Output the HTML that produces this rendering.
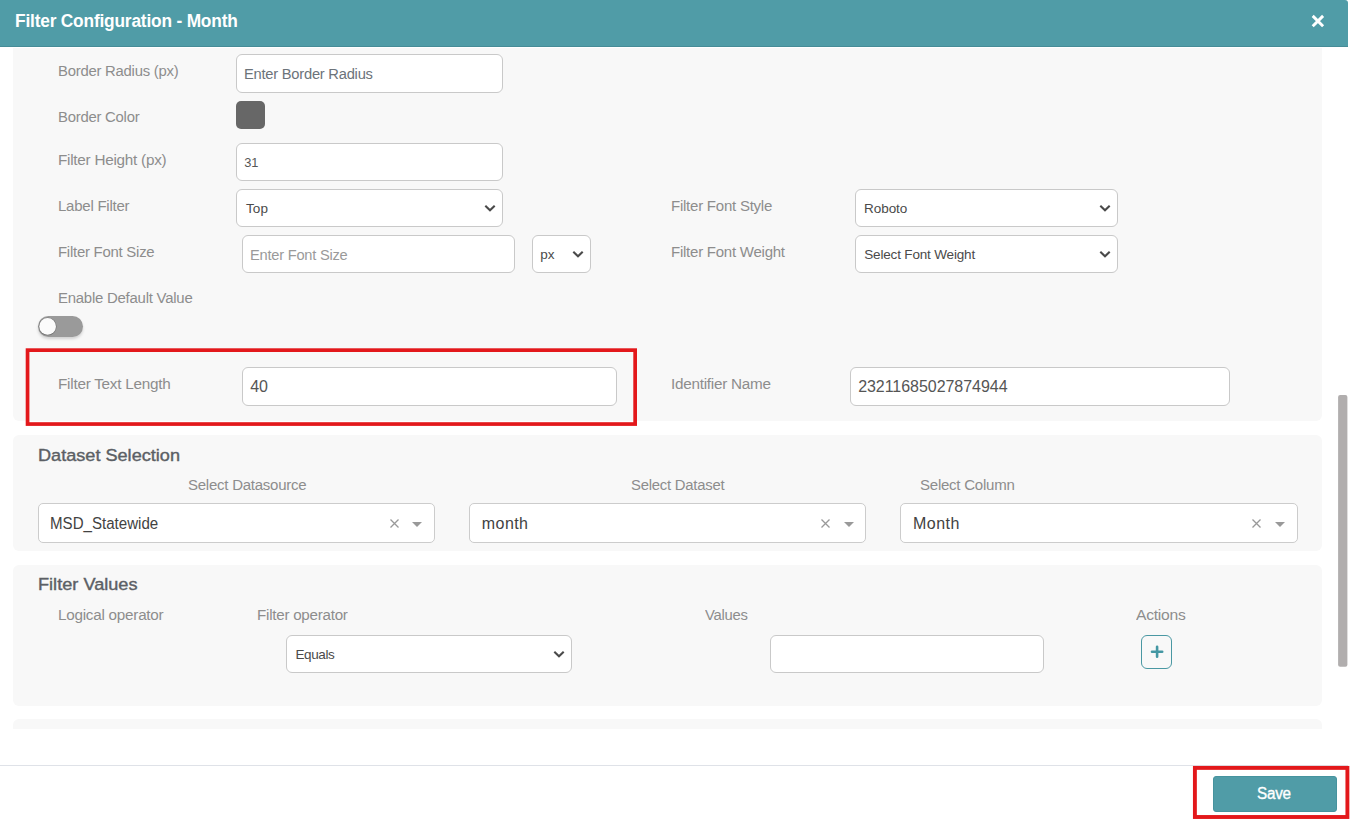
<!DOCTYPE html>
<html lang="en">
<head>
<meta charset="utf-8">
<title>Filter Configuration - Month</title>
<style>
*{box-sizing:border-box;margin:0;padding:0}
html,body{width:1350px;height:819px;overflow:hidden;background:#fff;font-family:"Liberation Sans",sans-serif;}
#root{position:relative;width:1350px;height:819px;overflow:hidden;background:#fff}
.abs{position:absolute}
.t{white-space:nowrap;line-height:20px;transform-origin:0 50%}
.hdr{left:0;top:0;width:1348px;height:47px;background:#509ca7;border-top-right-radius:3px;border-bottom:1px solid #468c97;box-shadow:0 1px 0 #fff}
.title{color:#fff;font-weight:bold}
.panel{left:13px;width:1309px;background:#f8f8f8}
.lbl{color:#8d8d8d}
.h{color:#5b5f65;-webkit-text-stroke:0.4px #5b5f65}
.ph{color:#6c737a}
.ph2{color:#9a9a9a}
.sm{color:#4a4a4a}
#V3{color:#565656}
.val{color:#555}
.ngv{color:#424242}
.save{color:#fff;-webkit-text-stroke:0.35px #fff}
.inp{background:#fff;border:1px solid #c9c9c9;border-radius:6px}
.chev{position:absolute;right:6.1px;top:14px;width:12px;height:9px}
.ngs{background:#fff;border:1px solid #ccc;border-radius:5px;height:40px}
.ngs .x{position:absolute;right:35.4px;top:15.3px;width:9px;height:9px}
.ngs .c{position:absolute;right:12px;top:17.7px;width:0;height:0;border-left:5px solid transparent;border-right:5px solid transparent;border-top:5.5px solid #999}
</style>
</head>
<body>
<div id="root">

<!-- panels -->
<div class="abs panel" style="top:48px;height:373px;border-radius:0 0 6px 6px"></div>
<div class="abs panel" style="top:435px;height:116px;border-radius:6px"></div>
<div class="abs panel" style="top:565px;height:141px;border-radius:6px"></div>
<div class="abs panel" style="top:719px;height:10px;border-radius:6px 6px 0 0"></div>

<!-- header -->
<div class="abs hdr"></div>
<svg class="abs" style="left:1310px;top:13px" width="16" height="16" viewBox="0 0 16 16"><path d="M2.7 2.9 L13.1 13.3 M13.1 2.9 L2.7 13.3" stroke="#fff" stroke-width="2.9" fill="none"/></svg>

<!-- row 1 -->
<div class="abs inp" style="left:236px;top:54px;width:267px;height:39px"></div>
<!-- row 2 -->
<div class="abs" style="left:236px;top:101px;width:29px;height:28px;background:#676767;border-radius:5px"></div>
<!-- row 3 -->
<div class="abs inp" style="left:236px;top:143px;width:267px;height:38px"></div>
<!-- row 4 -->
<div class="abs inp" style="left:236px;top:189px;width:267px;height:38px"><svg class="chev" viewBox="0 0 12 9"><path d="M1.3 1.8 L6 6.3 L10.7 1.8" stroke="#4a4a4a" stroke-width="2.1" fill="none"/></svg></div>
<div class="abs inp" style="left:855px;top:189px;width:263px;height:38px"><svg class="chev" viewBox="0 0 12 9"><path d="M1.3 1.8 L6 6.3 L10.7 1.8" stroke="#4a4a4a" stroke-width="2.1" fill="none"/></svg></div>
<!-- row 5 -->
<div class="abs inp" style="left:242px;top:235px;width:273px;height:38px"></div>
<div class="abs inp" style="left:532px;top:235px;width:59px;height:38px"><svg class="chev" viewBox="0 0 12 9"><path d="M1.3 1.8 L6 6.3 L10.7 1.8" stroke="#4a4a4a" stroke-width="2.1" fill="none"/></svg></div>
<div class="abs inp" style="left:855px;top:235px;width:263px;height:38px"><svg class="chev" viewBox="0 0 12 9"><path d="M1.3 1.8 L6 6.3 L10.7 1.8" stroke="#4a4a4a" stroke-width="2.1" fill="none"/></svg></div>
<!-- row 6 toggle -->
<div class="abs" style="left:38px;top:316px;width:45px;height:21px;border-radius:11px;background:#9a9a9a;box-shadow:0 2px 3px rgba(0,0,0,.16)"></div>
<svg class="abs" style="left:34px;top:312px" width="30" height="30" viewBox="0 0 30 30"><circle cx="13.6" cy="14.6" r="9" fill="#6e6e6e" opacity="0.85"/><circle cx="13.6" cy="14.4" r="8.35" fill="#fbfbfb"/></svg>
<!-- row 7 -->
<div class="abs inp" style="left:242px;top:367px;width:375px;height:39px"></div>
<div class="abs inp" style="left:850px;top:367px;width:380px;height:39px"></div>

<!-- dataset selection -->
<div class="abs ngs" style="left:38px;top:503px;width:397px"><svg class="x" viewBox="0 0 9 9"><path d="M0.5 0.5 L8.5 8.5 M8.5 0.5 L0.5 8.5" stroke="#999" stroke-width="1.3" fill="none"/></svg><i class="c"></i></div>
<div class="abs ngs" style="left:469px;top:503px;width:397px"><svg class="x" viewBox="0 0 9 9"><path d="M0.5 0.5 L8.5 8.5 M8.5 0.5 L0.5 8.5" stroke="#999" stroke-width="1.3" fill="none"/></svg><i class="c" style="right:11px"></i></div>
<div class="abs ngs" style="left:900px;top:503px;width:398px"><svg class="x" style="right:36.1px" viewBox="0 0 9 9"><path d="M0.5 0.5 L8.5 8.5 M8.5 0.5 L0.5 8.5" stroke="#999" stroke-width="1.3" fill="none"/></svg><i class="c"></i></div>

<!-- filter values -->
<div class="abs inp" style="left:286px;top:635px;width:286px;height:38px"><svg class="chev" viewBox="0 0 12 9"><path d="M1.3 1.8 L6 6.3 L10.7 1.8" stroke="#4a4a4a" stroke-width="2.1" fill="none"/></svg></div>
<div class="abs inp" style="left:770px;top:635px;width:274px;height:38px"></div>
<div class="abs" style="left:1141px;top:635px;width:31px;height:34px;border:1.2px solid #4a98a3;border-radius:6px;background:transparent"></div>
<svg class="abs" style="left:1150px;top:645px" width="14" height="14" viewBox="0 0 14 14"><path d="M7.1 1.8 V11.7 M2 6.75 H12.2" stroke="#4497a3" stroke-width="2.6" stroke-linecap="round" fill="none"/></svg>

<!-- footer -->
<div class="abs" style="left:0;top:729px;width:1337px;height:90px;background:#fff"></div>
<div class="abs" style="left:0;top:765px;width:1348px;height:1px;background:#dfe2e8"></div>
<div class="abs" style="left:1213px;top:776px;width:124px;height:36px;background:#509ca7;border-radius:3px;border:1px solid #46939e"></div>

<div id="title" class="abs t title" style="left:15.47px;top:10.96px;font-size:18px;letter-spacing:-0.200px;transform:scaleX(0.9622)">Filter Configuration - Month</div>
<div id="L1" class="abs t lbl" style="left:58.04px;top:60.83px;font-size:15.5px;letter-spacing:-0.250px;transform:scaleX(0.9586)">Border Radius (px)</div>
<div id="L2" class="abs t lbl" style="left:58.04px;top:106.83px;font-size:15.5px;letter-spacing:-0.250px;transform:scaleX(0.9591)">Border Color</div>
<div id="L3" class="abs t lbl" style="left:57.94px;top:149.83px;font-size:15.5px;letter-spacing:-0.250px;transform:scaleX(0.9850)">Filter Height (px)</div>
<div id="L4" class="abs t lbl" style="left:57.95px;top:195.83px;font-size:15.5px;letter-spacing:-0.250px;transform:scaleX(0.9682)">Label Filter</div>
<div id="L5" class="abs t lbl" style="left:58.04px;top:241.83px;font-size:15.5px;letter-spacing:-0.250px;transform:scaleX(0.9620)">Filter Font Size</div>
<div id="L6" class="abs t lbl" style="left:58.04px;top:287.83px;font-size:15.5px;letter-spacing:-0.250px;transform:scaleX(0.9639)">Enable Default Value</div>
<div id="L7" class="abs t lbl" style="left:57.94px;top:373.83px;font-size:15.5px;letter-spacing:-0.250px;transform:scaleX(0.9862)">Filter Text Length</div>
<div id="R4" class="abs t lbl" style="left:670.95px;top:195.83px;font-size:15.5px;letter-spacing:-0.250px;transform:scaleX(0.9691)">Filter Font Style</div>
<div id="R5" class="abs t lbl" style="left:670.95px;top:241.83px;font-size:15.5px;letter-spacing:-0.250px;transform:scaleX(0.9679)">Filter Font Weight</div>
<div id="R7" class="abs t lbl" style="left:671.19px;top:373.83px;font-size:15.5px;letter-spacing:-0.250px;transform:scaleX(0.9840)">Identifier Name</div>
<div id="P1" class="abs t ph" style="left:244.43px;top:63.83px;font-size:15.5px;letter-spacing:-0.250px;transform:scaleX(0.9484)">Enter Border Radius</div>
<div id="V3" class="abs t sm" style="left:244.25px;top:152.76px;font-size:12.8px;letter-spacing:0.000px;transform:scaleX(1.0000)">31</div>
<div id="V4" class="abs t sm" style="left:246.03px;top:198.52px;font-size:13.5px;letter-spacing:0.092px;transform:scaleX(1.0000)">Top</div>
<div id="V4r" class="abs t sm" style="left:864.11px;top:198.52px;font-size:13.5px;letter-spacing:-0.076px;transform:scaleX(1.0000)">Roboto</div>
<div id="P5" class="abs t ph2" style="left:250.12px;top:244.83px;font-size:15.5px;letter-spacing:-0.250px;transform:scaleX(0.9457)">Enter Font Size</div>
<div id="V5" class="abs t sm" style="left:540.34px;top:244.52px;font-size:13.5px;letter-spacing:0.000px;transform:scaleX(1.0000)">px</div>
<div id="V5r" class="abs t sm" style="left:864.27px;top:244.52px;font-size:13.5px;letter-spacing:-0.173px;transform:scaleX(1.0000)">Select Font Weight</div>
<div id="V7" class="abs t val" style="left:250.22px;top:376.66px;font-size:16px;letter-spacing:0.000px;transform:scaleX(1.0000)">40</div>
<div id="V7r" class="abs t val" style="left:858.14px;top:376.66px;font-size:16px;letter-spacing:-0.041px;transform:scaleX(1.0000)">23211685027874944</div>
<div id="H1" class="abs t h" style="left:37.75px;top:445.24px;font-size:17.2px;letter-spacing:0.000px;transform:scaleX(1.0538)">Dataset Selection</div>
<div id="D1" class="abs t lbl" style="left:187.96px;top:474.83px;font-size:15.5px;letter-spacing:-0.250px;transform:scaleX(0.9674)">Select Datasource</div>
<div id="D2" class="abs t lbl" style="left:630.53px;top:474.83px;font-size:15.5px;letter-spacing:-0.250px;transform:scaleX(0.9589)">Select Dataset</div>
<div id="D3" class="abs t lbl" style="left:920.04px;top:474.83px;font-size:15.5px;letter-spacing:-0.250px;transform:scaleX(0.9694)">Select Column</div>
<div id="S1" class="abs t ngv" style="left:49.74px;top:513.66px;font-size:16px;letter-spacing:0.000px;transform:scaleX(0.9428)">MSD_Statewide</div>
<div id="S2" class="abs t ngv" style="left:481.85px;top:513.66px;font-size:16px;letter-spacing:0.411px;transform:scaleX(1.0000)">month</div>
<div id="S3" class="abs t ngv" style="left:912.93px;top:513.66px;font-size:16px;letter-spacing:0.492px;transform:scaleX(1.0000)">Month</div>
<div id="H2" class="abs t h" style="left:38.22px;top:574.24px;font-size:17.2px;letter-spacing:0.000px;transform:scaleX(1.0562)">Filter Values</div>
<div id="F1" class="abs t lbl" style="left:57.94px;top:604.83px;font-size:15.5px;letter-spacing:-0.250px;transform:scaleX(0.9838)">Logical operator</div>
<div id="F2" class="abs t lbl" style="left:256.95px;top:604.83px;font-size:15.5px;letter-spacing:-0.250px;transform:scaleX(0.9774)">Filter operator</div>
<div id="F3" class="abs t lbl" style="left:705.21px;top:604.83px;font-size:15.5px;letter-spacing:-0.250px;transform:scaleX(0.9556)">Values</div>
<div id="F4" class="abs t lbl" style="left:1136.03px;top:604.83px;font-size:15.5px;letter-spacing:-0.250px;transform:scaleX(1.0093)">Actions</div>
<div id="V8" class="abs t sm" style="left:295.40px;top:644.52px;font-size:13.5px;letter-spacing:-0.359px;transform:scaleX(1.0000)">Equals</div>
<div id="save" class="abs t save" style="left:1257.48px;top:783.66px;font-size:16px;letter-spacing:-0.250px;transform:scaleX(0.9538)">Save</div>

<!-- red highlight rectangles -->
<svg class="abs" style="left:0;top:0" width="1350" height="819" viewBox="0 0 1350 819"><rect x="27.55" y="350.15" width="607.6" height="73.9" fill="none" stroke="#e3181b" stroke-width="3.7"/><rect x="1194.9" y="767.9" width="152.5" height="49.1" fill="none" stroke="#e3181b" stroke-width="3.9"/></svg>

<!-- scrollbar -->
<svg class="abs" style="left:1330px;top:390px" width="20" height="285" viewBox="1330 390 20 285"><rect x="1338.1" y="395" width="9.3" height="271.7" rx="2" fill="#b1aeae"/></svg>

</div>
</body>
</html>
